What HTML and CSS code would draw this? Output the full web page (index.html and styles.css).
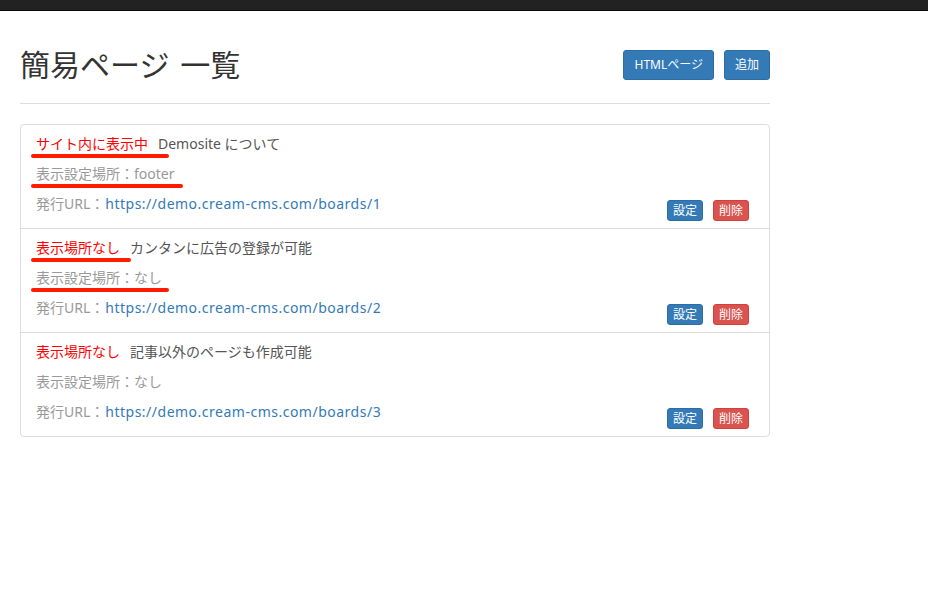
FILE: index.html
```html
<!DOCTYPE html>
<html lang="ja">
<head>
<meta charset="utf-8">
<title>簡易ページ 一覧</title>
<link rel="stylesheet" href="styles.css">
</head>
<body>
<div class="topbar"></div>
<main class="container">
  <div class="page-header">
    <h1 class="title">簡易ページ 一覧</h1>
    <div class="header-actions">
      <a class="btn btn-primary btn-sm" href="#">HTMLページ</a>
      <a class="btn btn-primary btn-sm" href="#">追加</a>
    </div>
  </div>

  <div class="list">
    <div class="item">
      <div class="info">
        <p class="line"><span class="status">サイト内に表示中</span><span class="desc">Demosite について</span></p>
        <p class="line muted">表示設定場所：footer</p>
        <p class="line muted">発行URL：<a class="link" href="#">https://demo.cream-cms.com/boards/1</a></p>
      </div>
      <div class="actions">
        <a class="btn btn-primary btn-xs" href="#">設定</a>
        <a class="btn btn-danger btn-xs" href="#">削除</a>
      </div>
      <span class="mark mark-a1"></span>
      <span class="mark mark-a2"></span>
    </div>
    <div class="item">
      <div class="info">
        <p class="line"><span class="status">表示場所なし</span><span class="desc">カンタンに広告の登録が可能</span></p>
        <p class="line muted">表示設定場所：なし</p>
        <p class="line muted">発行URL：<a class="link" href="#">https://demo.cream-cms.com/boards/2</a></p>
      </div>
      <div class="actions">
        <a class="btn btn-primary btn-xs" href="#">設定</a>
        <a class="btn btn-danger btn-xs" href="#">削除</a>
      </div>
      <span class="mark mark-b1"></span>
      <span class="mark mark-b2"></span>
    </div>
    <div class="item">
      <div class="info">
        <p class="line"><span class="status">表示場所なし</span><span class="desc">記事以外のページも作成可能</span></p>
        <p class="line muted">表示設定場所：なし</p>
        <p class="line muted">発行URL：<a class="link" href="#">https://demo.cream-cms.com/boards/3</a></p>
      </div>
      <div class="actions">
        <a class="btn btn-primary btn-xs" href="#">設定</a>
        <a class="btn btn-danger btn-xs" href="#">削除</a>
      </div>
    </div>
  </div>
</main>
</body>
</html>
```

FILE: styles.css
```css
* { box-sizing: border-box; }
html, body { margin: 0; padding: 0; background: #fff; }
body {
  font-family: "Noto Sans", "Noto Sans CJK JP", sans-serif;
  font-size: 14px;
  line-height: 20px;
  color: #555;
}
.topbar {
  height: 11px;
  background: #222;
  border-bottom: 1px solid #0a0a0a;
}
.container {
  width: 790px;
  padding: 0 20px;
}
.page-header {
  display: flex;
  align-items: center;
  justify-content: space-between;
  margin-top: 37px;
  padding-bottom: 21px;
  border-bottom: 1px solid #ddd;
  box-sizing: content-box;
  height: 34px;
}
.title {
  margin: 0;
  font-size: 30px;
  line-height: 34px;
  font-weight: 400;
  color: #333;
  font-family: "Noto Sans", "Noto Sans CJK JP", sans-serif;
  word-spacing: 3px;
}
.header-actions {
  display: flex;
  gap: 10px;
}
.btn {
  display: inline-block;
  color: #fff;
  text-decoration: none;
  border: 1px solid transparent;
  border-radius: 3px;
  font-size: 12px;
  text-align: center;
  white-space: nowrap;
}
.btn-sm { padding: 5px 10px; line-height: 18px; }
.btn-xs { padding: 1px 5px; line-height: 17px; }
.btn-primary { background: #337ab7; border-color: #2e6da4; }
.btn-danger { background: #d9534f; border-color: #d43f3a; }
.list {
  margin-top: 20px;
  border: 1px solid #ddd;
  border-radius: 4px;
}
.item {
  position: relative;
  display: flex;
  justify-content: space-between;
  padding: 9px 20px 0 15px;
  height: 94px;
  box-sizing: content-box;
}
.item + .item { border-top: 1px solid #ddd; }
.line {
  margin: 0 0 10px;
  height: 20px;
  white-space: nowrap;
}
.status { color: #f00; margin-right: 10px; }
.desc { color: #555; }
.muted { color: #999; }
.link { color: #337ab7; text-decoration: none; letter-spacing: 0.5px; margin-left: 1px; }
.actions {
  align-self: flex-end;
  display: flex;
  gap: 10px;
  margin-bottom: 7px;
}
.mark {
  position: absolute;
  left: 10px;
  height: 4px;
  background: #ff1a00;
  border-radius: 2px;
}
.mark-a1 { top: 29px; width: 138px; }
.mark-a2 { top: 59px; width: 152px; }
.mark-b1 { top: 29px; width: 100px; }
.mark-b2 { top: 59px; width: 138px; }
```
